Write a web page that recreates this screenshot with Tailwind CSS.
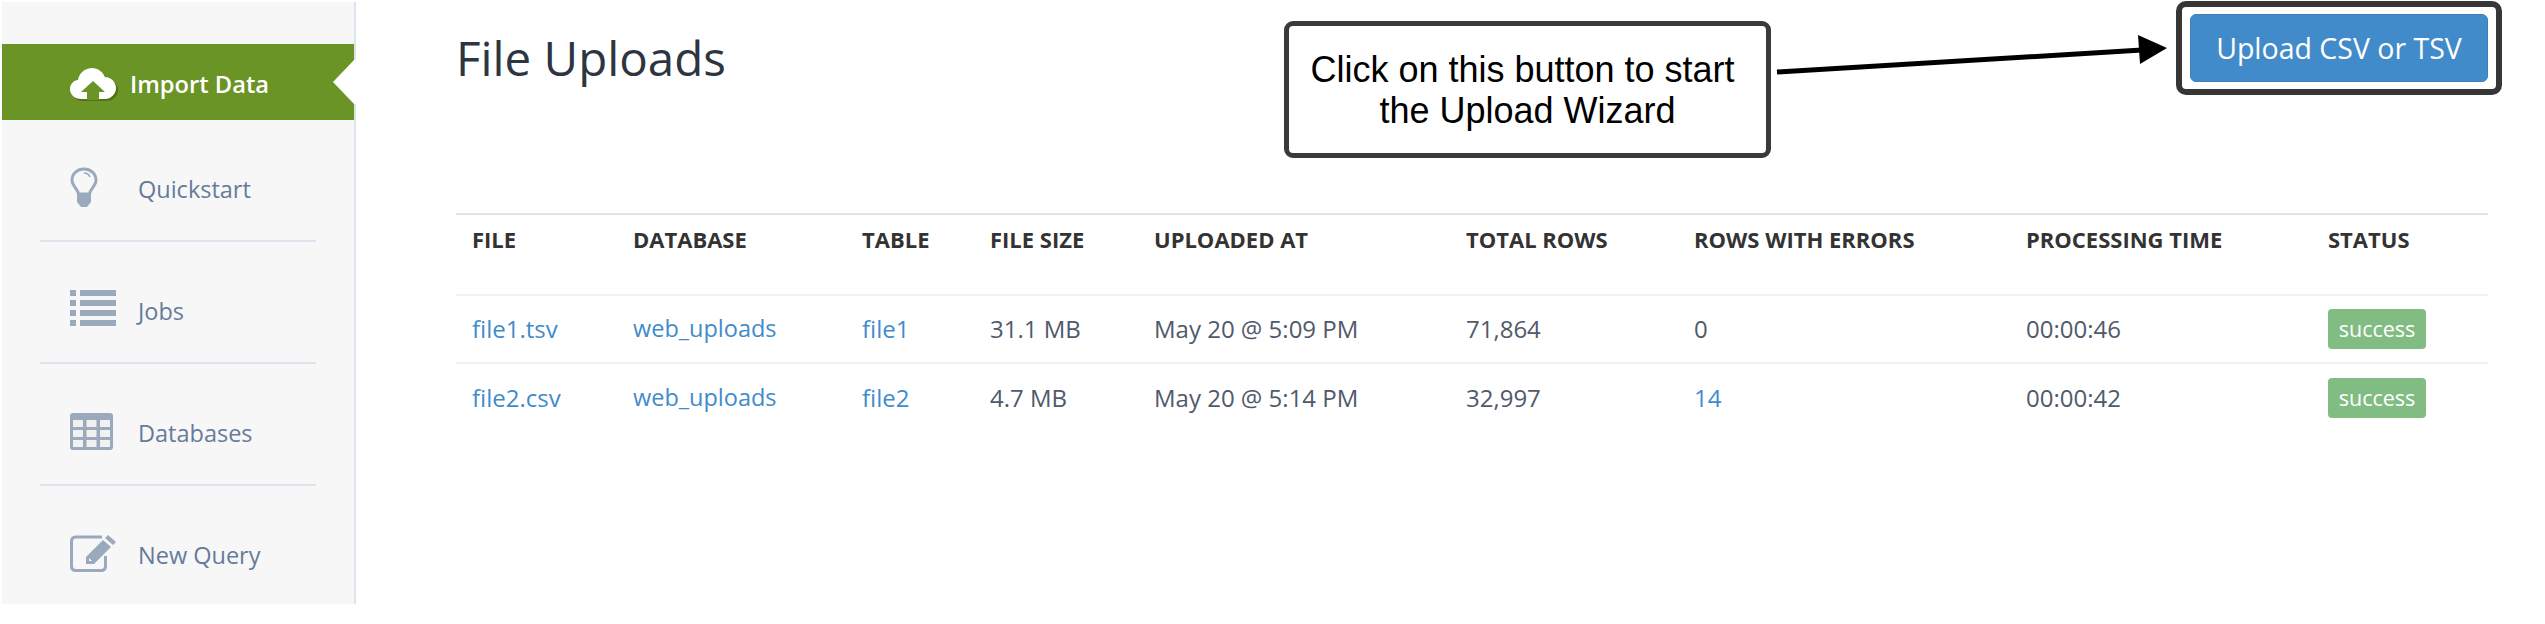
<!DOCTYPE html>
<html>
<head>
<meta charset="utf-8">
<script src="https://cdn.jsdelivr.net/npm/@tailwindcss/browser@4"></script>
</head>
<body class="bg-white font-['Open_Sans',sans-serif]">
<div class="relative flex w-[2545px] h-[624px] overflow-hidden bg-white">
  <!-- Sidebar -->
  <aside class="relative ml-[2px] mt-[2px] h-[602px] w-[354px] shrink-0 border-r-2 border-[#dde4ee] bg-[#f7f7f7] pt-[42px]">
    <div class="flex h-[76px] items-center bg-[#6b9426] pl-[68px]">
      <svg class="w-[48px] h-[34px] mr-[12px] mt-[4px]" viewBox="0 0 48 34">
        <path fill="#53701c" d="M12 33 C5 33 1 28 1 23 C1 18 5 14 9 14 C10 7 16 2 23 2 C29 2 34 6 36 11 C42 11 47 16 47 22 C47 28 42 33 36 33 Z" transform="translate(1 1)"/>
        <path fill="#fff" d="M11 32 C5 32 0 28 0 22 C0 17 4 13 8 13 C9 6 15 1 22 1 C28 1 33 5 35 10 C41 10 46 15 46 21 C46 27 41 32 35 32 Z"/>
        <path fill="#6b9426" d="M23 14 L35 25 H29 V33 H17 V25 H11 Z"/>
      </svg>
      <span class="pt-[6px] text-[23.700px] leading-none font-semibold text-white">Import Data</span>
    </div>
    <svg class="absolute left-[331px] top-[58px] w-[23px] h-[44px]" viewBox="0 0 23 44"><path fill="#fff" d="M0 22 L21 0 H23 V44 H21 Z"/></svg>

    <div class="mx-[38px] h-[122px] border-b-2 border-[#dde4ee] flex items-center pt-[18px] pl-[30px]">
      <svg class="w-[28px] h-[40px] mr-[40px] -mt-[4px]" viewBox="0 0 28 40">
        <path fill="none" stroke="#9aa9bc" stroke-width="3" d="M8.5 27 C8 22 2 19 2 13 C2 6.500 7.500 2 14 2 C20.500 2 26 6.500 26 13 C26 19 20 22 19.500 27 Z"/>
        <path fill="none" stroke="#9aa9bc" stroke-width="1.500" d="M14 6 C17 6 19 7.500 20 10"/>
        <path fill="#9aa9bc" d="M7 28 H21 V35 L17 40 H11 L7 35 Z"/>
      </svg>
      <span class="pt-[2px] text-[23.500px] leading-none text-[#667b9b]">Quickstart</span>
    </div>
    <div class="mx-[38px] h-[122px] border-b-2 border-[#dde4ee] flex items-center pt-[18px] pl-[30px]">
      <svg class="w-[46px] h-[38px] mr-[22px] -mt-[4px]" viewBox="0 0 46 38" fill="#9aa9bc">
        <rect x="0" y="0" width="6" height="6"/><rect x="10" y="0" width="36" height="6"/>
        <rect x="0" y="10" width="6" height="6"/><rect x="10" y="10" width="36" height="6"/>
        <rect x="0" y="20" width="6" height="6"/><rect x="10" y="20" width="36" height="6"/>
        <rect x="0" y="30" width="6" height="6"/><rect x="10" y="30" width="36" height="6"/>
      </svg>
      <span class="pt-[2px] text-[23.500px] leading-none text-[#667b9b]">Jobs</span>
    </div>
    <div class="mx-[38px] h-[122px] border-b-2 border-[#dde4ee] flex items-center pt-[18px] pl-[30px]">
      <svg class="w-[43px] h-[37px] mr-[25px] -mt-[4px]" viewBox="0 0 43 37">
        <rect width="43" height="37" rx="3" fill="#9aa9bc"/>
        <g fill="#f1f1f1">
          <rect x="3" y="7" width="10" height="7"/><rect x="16.500" y="7" width="10" height="7"/><rect x="30" y="7" width="10" height="7"/>
          <rect x="3" y="17" width="10" height="7"/><rect x="16.500" y="17" width="10" height="7"/><rect x="30" y="17" width="10" height="7"/>
          <rect x="3" y="27" width="10" height="7"/><rect x="16.500" y="27" width="10" height="7"/><rect x="30" y="27" width="10" height="7"/>
        </g>
      </svg>
      <span class="pt-[2px] text-[23.500px] leading-none text-[#667b9b]">Databases</span>
    </div>
    <div class="mx-[38px] h-[120px] flex items-center pt-[18px] pl-[30px]">
      <svg class="w-[46px] h-[38px] mr-[22px] -mt-[4px]" viewBox="0 0 46 38">
        <path fill="none" stroke="#9aa9bc" stroke-width="3" stroke-linejoin="round" d="M32 3 H6 Q1.500 3 1.500 7.500 V32 Q1.500 36.500 6 36.500 H31 Q35.500 36.500 35.500 32 V22"/>
        <path fill="#9aa9bc" d="M38 1 L46 8 L43 11 L35 4 Z M33 6 L41 13 L24 30 L16 30 L16 23 Z"/>
        <path fill="#f7f7f7" d="M19 24 L22 27 L19 27 Z"/>
      </svg>
      <span class="pt-[2px] text-[23.500px] leading-none text-[#667b9b]">New Query</span>
    </div>
  </aside>

  <!-- Main -->
  <main class="flex-1 min-w-0 pl-[100px] pr-[57px] pt-px">
    <div class="flex items-start justify-between h-[94px]">
      <h1 class="mt-[30px] text-[47.500px] leading-[54px] font-normal text-[#2d3540]">File Uploads</h1>
      <div class="-mr-[14px] rounded-[10px] border-[6px] border-[#363636] px-[8px] py-[7px]">
        <button class="flex h-[68px] w-[298px] items-center justify-center rounded-[6px] border border-[#3d7fb9] bg-[#428bca] text-[28.500px] text-white">Upload CSV or TSV</button>
      </div>
    </div>

    <table class="mt-[118px] w-[2032px] table-fixed border-collapse border-t-2 border-[#e0e5ea] text-left">
      <colgroup>
        <col class="w-[161px]"><col class="w-[229px]"><col class="w-[128px]"><col class="w-[164px]"><col class="w-[312px]"><col class="w-[228px]"><col class="w-[332px]"><col class="w-[302px]"><col class="w-[176px]">
      </colgroup>
      <thead>
        <tr class="h-[81px] border-b-2 border-[#eef2f6] align-top text-[22px] leading-[26px] font-bold text-[#333333]">
          <th class="pl-[16px] pt-[11px] font-bold">FILE</th>
          <th class="pl-[16px] pt-[11px] font-bold">DATABASE</th>
          <th class="pl-[16px] pt-[11px] font-bold">TABLE</th>
          <th class="pl-[16px] pt-[11px] font-bold">FILE SIZE</th>
          <th class="pl-[16px] pt-[11px] font-bold">UPLOADED AT</th>
          <th class="pl-[16px] pt-[11px] font-bold">TOTAL ROWS</th>
          <th class="pl-[16px] pt-[11px] font-bold">ROWS WITH ERRORS</th>
          <th class="pl-[16px] pt-[11px] font-bold">PROCESSING TIME</th>
          <th class="pl-[16px] pt-[11px] font-bold">STATUS</th>
        </tr>
      </thead>
      <tbody class="text-[24px] text-[#505a6b]">
        <tr class="h-[68px] border-b-2 border-[#eef2f6]">
          <td class="pl-[16px] text-[#428bca]">file1.tsv</td>
          <td class="pl-[16px] text-[23.500px] text-[#428bca]">web_uploads</td>
          <td class="pl-[16px] text-[#428bca]">file1</td>
          <td class="pl-[16px]">31.1 MB</td>
          <td class="pl-[16px]">May 20 @ 5:09 PM</td>
          <td class="pl-[16px]">71,864</td>
          <td class="pl-[16px]">0</td>
          <td class="pl-[16px]">00:00:46</td>
          <td class="pl-[16px]"><span class="inline-flex h-[40px] w-[98px] items-center justify-center rounded-[4px] bg-[#81bd83] align-middle text-[21.500px] text-white">success</span></td>
        </tr>
        <tr class="h-[68px]">
          <td class="pl-[16px] text-[#428bca]">file2.csv</td>
          <td class="pl-[16px] text-[23.500px] text-[#428bca]">web_uploads</td>
          <td class="pl-[16px] text-[#428bca]">file2</td>
          <td class="pl-[16px]">4.7 MB</td>
          <td class="pl-[16px]">May 20 @ 5:14 PM</td>
          <td class="pl-[16px]">32,997</td>
          <td class="pl-[16px] text-[#428bca]">14</td>
          <td class="pl-[16px]">00:00:42</td>
          <td class="pl-[16px]"><span class="inline-flex h-[40px] w-[98px] items-center justify-center rounded-[4px] bg-[#81bd83] align-middle text-[21.500px] text-white">success</span></td>
        </tr>
      </tbody>
    </table>
  </main>

  <!-- Annotation -->
  <div class="absolute left-[1284px] top-[21px] flex h-[137px] w-[487px] items-center justify-center rounded-[9px] border-[5px] border-[#3a3a3a] bg-white text-center font-['Liberation_Sans',sans-serif] text-[36px] leading-[41px] text-black">
    <span>Click on this button to start&nbsp;<br>the Upload Wizard</span>
  </div>
  <svg class="absolute left-0 top-0 w-[2545px] h-[624px] pointer-events-none" viewBox="0 0 2545 624">
    <path d="M1777 72 L2142 50" stroke="#000" stroke-width="5" fill="none"/>
    <path d="M2138 35 L2167 48 L2140 64 Z" fill="#000"/>
  </svg>
</div>
</body>
</html>
